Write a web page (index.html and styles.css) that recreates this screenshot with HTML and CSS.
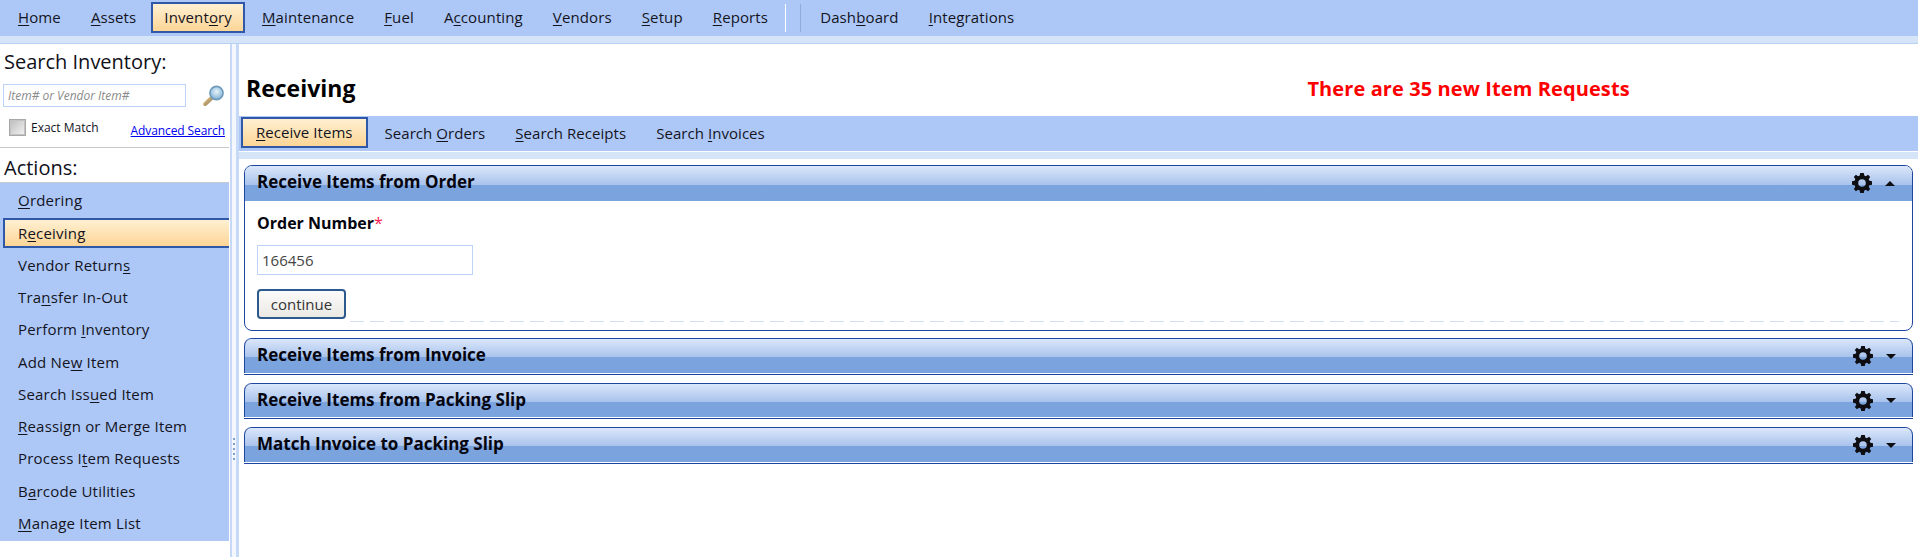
FILE: index.html
```html
<!DOCTYPE html>
<html lang="en">
<head>
<meta charset="utf-8">
<title>Receiving</title>
<link rel="stylesheet" href="styles.css">
</head>
<body>
<svg class="defs" width="0" height="0" aria-hidden="true">
  <symbol id="gear" viewBox="0 0 20 20">
    <path d="M8.2 0h3.6l.5 2.6 1.6.7 2.2-1.5 2.1 2.1-1.5 2.2.7 1.6 2.6.5v3.6l-2.6.5-.7 1.6 1.5 2.2-2.1 2.1-2.2-1.5-1.6.7-.5 2.6H8.2l-.5-2.6-1.6-.7-2.2 1.5-2.1-2.1 1.5-2.2-.7-1.6L0 11.8V8.2l2.6-.5.7-1.6-1.5-2.2 2.1-2.1 2.2 1.5 1.6-.7zM10 6.2a3.8 3.8 0 1 0 0 7.6 3.8 3.8 0 0 0 0-7.6z" fill="#0d0d12" fill-rule="evenodd"/>
  </symbol>
</svg>
<header class="topbar">
  <nav class="mainnav">
    <a class="nav-item"><u>H</u>ome</a>
    <a class="nav-item"><u>A</u>ssets</a>
    <a class="nav-item active">Invent<u>o</u>ry</a>
    <a class="nav-item"><u>M</u>aintenance</a>
    <a class="nav-item"><u>F</u>uel</a>
    <a class="nav-item">A<u>c</u>counting</a>
    <a class="nav-item"><u>V</u>endors</a>
    <a class="nav-item"><u>S</u>etup</a>
    <a class="nav-item"><u>R</u>eports</a>
    <span class="nav-sep"></span>
    <a class="nav-item">Dash<u>b</u>oard</a>
    <a class="nav-item"><u>I</u>ntegrations</a>
  </nav>
</header>
<div class="band"></div>
<div class="layout">
  <aside class="sidebar">
    <h2 class="side-title">Search Inventory:</h2>
    <div class="search-row">
      <input class="search-input" type="text" placeholder="Item# or Vendor Item#">
      <svg class="magnifier" viewBox="0 0 22 22" aria-hidden="true">
        <defs>
          <radialGradient id="lens" cx="50%" cy="40%" r="60%">
            <stop offset="0" stop-color="#e6f4fb"/>
            <stop offset="1" stop-color="#7fb0d2"/>
          </radialGradient>
          <linearGradient id="handle" x1="0" y1="0" x2="1" y2="1">
            <stop offset="0" stop-color="#e8c98a"/>
            <stop offset="1" stop-color="#8f7a55"/>
          </linearGradient>
        </defs>
        <path d="M9 12.5 2.2 19" stroke="url(#handle)" stroke-width="4" stroke-linecap="round"/>
        <circle cx="13.5" cy="8" r="6.6" fill="url(#lens)" stroke="#6f9cbd" stroke-width="1.6"/>
      </svg>
    </div>
    <div class="match-row">
      <label class="exact"><span class="checkbox"></span>Exact Match</label>
      <a class="advanced">Advanced Search</a>
    </div>
    <h2 class="side-title actions-title">Actions:</h2>
    <ul class="side-menu">
      <li><u>O</u>rdering</li>
      <li class="active">R<u>e</u>ceiving</li>
      <li>Vendor Return<u>s</u></li>
      <li>Tra<u>n</u>sfer In-Out</li>
      <li>Perform <u>I</u>nventory</li>
      <li>Add Ne<u>w</u> Item</li>
      <li>Search Iss<u>u</u>ed Item</li>
      <li><u>R</u>eassign or Merge Item</li>
      <li>Process I<u>t</u>em Requests</li>
      <li>B<u>a</u>rcode Utilities</li>
      <li><u>M</u>anage Item List</li>
    </ul>
  </aside>
  <div class="splitter"><span class="grip"></span></div>
  <main class="content">
    <div class="page-head">
      <h1 class="page-title">Receiving</h1>
      <p class="notice">There are 35 new Item Requests</p>
    </div>
    <nav class="tabs">
      <a class="tab active"><u>R</u>eceive Items</a>
      <a class="tab">Search <u>O</u>rders</a>
      <a class="tab"><u>S</u>earch Receipts</a>
      <a class="tab">Search <u>I</u>nvoices</a>
    </nav>
    <div class="band band-sub"></div>
    <section class="panel open">
      <div class="panel-head">
        <h3>Receive Items from Order</h3>
        <svg class="gear"><use href="#gear"/></svg>
        <span class="caret up"></span>
      </div>
      <div class="panel-body">
        <label class="field-label">Order Number<span class="req">*</span></label>
        <input class="order-input" type="text" value="166456">
        <button class="btn" type="button">continue</button>
        <div class="dash"></div>
      </div>
    </section>
    <section class="panel">
      <div class="panel-head">
        <h3>Receive Items from Invoice</h3>
        <svg class="gear"><use href="#gear"/></svg>
        <span class="caret"></span>
      </div>
    </section>
    <section class="panel short">
      <div class="panel-head">
        <h3>Receive Items from Packing Slip</h3>
        <svg class="gear"><use href="#gear"/></svg>
        <span class="caret"></span>
      </div>
    </section>
    <section class="panel">
      <div class="panel-head">
        <h3>Match Invoice to Packing Slip</h3>
        <svg class="gear"><use href="#gear"/></svg>
        <span class="caret"></span>
      </div>
    </section>
  </main>
</div>
</body>
</html>
```

FILE: styles.css
```css
* { box-sizing: border-box; }
html, body { margin: 0; padding: 0; height: 557px; overflow: hidden; background: #fff; }
body { font-family: "Open Sans", "Noto Sans", "Liberation Sans", sans-serif; font-size: 15px; color: #14141e; }
.defs { position: absolute; }
u { text-underline-offset: 2px; }

.topbar { height: 36px; background: #adc8f7; padding: 1px 0 0 3px; }
.mainnav { display: flex; align-items: flex-start; height: 32px; }
.nav-item { display: block; height: 31px; line-height: 30px; padding: 0 15px; margin-top: 1px; white-space: nowrap; letter-spacing: .12px; }
.nav-item.active { padding: 0 11px; line-height: 27px; border: 2px solid #2f58a8; background: linear-gradient(#fff0d2, #fdd596); margin: 1px 2px 0 0; }
.nav-sep { width: 16px; height: 28px; margin: 3px 4px 0 2px; border-left: 1px solid #fff; border-right: 1px solid #8fadd9; }

.band { height: 8px; background: #d5e4f6; border-bottom: 1px solid #b9d0f5; }
.layout { display: flex; height: 513px; }

.sidebar { width: 230px; flex: none; }
.side-title { margin: 0; font-weight: 400; font-size: 20px; line-height: 28px; padding: 4px 0 0 4px; color: #10101a; }
.search-row { display: flex; align-items: center; padding: 8px 0 0 3px; }
.search-input { width: 183px; height: 23px; border: 1px solid #bcd3f7; padding: 0 4px; font: italic 12px "Open Sans", sans-serif; outline: none; }
.search-input::placeholder { color: #8a8a8a; opacity: 1; }
.magnifier { width: 22px; height: 22px; margin-left: 17px; }
.match-row { display: flex; justify-content: space-between; align-items: flex-end; height: 41px; padding: 0 4px 7px 9px; border-bottom: 1px solid #c8c8c8; width: 229px; }
.exact { display: flex; align-items: center; font-size: 12px; gap: 5px; margin-bottom: 4px; }
.checkbox { width: 17px; height: 17px; border: 2px solid #c4c4c4; background: linear-gradient(135deg, #c0c0c0, #f0f0f0); outline: 1px solid #a8a8a8; outline-offset: -1px; }
.advanced { font-size: 12px; letter-spacing: -.1px; color: #0000ee; text-decoration: underline; margin-bottom: 1px; }
.actions-title { line-height: 30px; padding-top: 5px; height: 34px; }
.side-menu { list-style: none; margin: 0; padding: 1px 0 0; width: 229px; height: 359px; background: #adc8f7; border-top: 1px solid #c8c8d0; }
.side-menu li { height: 32.3px; line-height: 32px; padding-left: 18px; white-space: nowrap; letter-spacing: .2px; }
.side-menu li.active { margin-left: 3px; padding-left: 13px; line-height: 26px; border: 2px solid #2f58a8; border-right: 0; background: linear-gradient(#fff0d2, #fdd596); height: 30px; margin-top: 2px; margin-bottom: .4px; }

.splitter { width: 9px; flex: none; position: relative; border-left: 2px solid #c6daf8; border-right: 3px solid #c6daf8; background: #f4f8fe; }
.grip { position: absolute; left: 1px; top: 394px; width: 2px; height: 24px; background: repeating-linear-gradient(#7fa0d0 0 2px, transparent 2px 5px); }

.content { flex: 1; min-width: 0; }
.page-head { display: flex; align-items: center; height: 72px; padding: 16px 0 0 7px; }
.page-title { margin: 0; font-size: 23px; font-weight: 700; color: #000; }
.notice { margin: 0 0 0 952px; font-size: 20px; letter-spacing: .1px; font-weight: 700; color: #ff0000; white-space: nowrap; }

.tabs { display: flex; height: 35px; background: #adc8f7; padding: 1px 0 0 2px; align-items: flex-start; }
.tab { display: block; height: 33px; line-height: 33px; padding: 0 15px; white-space: nowrap; letter-spacing: .05px; }
.tab.active { height: 31px; line-height: 27px; border: 2px solid #2f58a8; background: linear-gradient(#fff0d2, #fdd596); padding: 0 13px; margin-right: 2px; }
.band-sub { border-top: 1px solid #fff; border-bottom: 0; height: 8px; margin-bottom: 6px; }

.panel { margin: 0 5px 8px 5px; border-top: 1px solid #1f469e; border-radius: 8px 8px 0 0; border-bottom: 1px solid #1f469e; padding-bottom: 1px; }
.panel.open { border: 1px solid #1f469e; border-radius: 8px; padding-bottom: 0; margin-bottom: 7px; }
.panel-head { display: flex; align-items: center; height: 34px; padding: 0 16px 3px 12px; border: solid #1f469e; border-width: 0 1px; border-radius: 7px 7px 0 0; background: linear-gradient(#dbe7fb, #a9c3ec 53%, #7ba3dd 54%, #7ba3dd); }
.panel.short .panel-head { height: 33px; }
.panel.open .panel-head { border: 0; padding: 0 17px 4px 12px; height: 35px; }
.panel-head h3 { flex: 1; margin: 0; font-size: 17px; font-weight: 700; color: #050510; }
.gear { width: 20px; height: 20px; margin: 3px 13px 0 0; flex: none; }
.caret { width: 0; height: 0; border: 5px solid transparent; border-top: 5px solid #0d0d12; border-bottom: 0; margin-top: 3px; }
.caret.up { border-top: 0; border-bottom: 5px solid #0d0d12; }

.panel-body { position: relative; height: 129px; padding: 10px 12px 0; }
.field-label { display: block; font-size: 16px; font-weight: 700; line-height: 24px; color: #050510; }
.req { color: #ff2050; font-weight: 400; }
.order-input { display: block; width: 216px; height: 30px; margin-top: 10px; padding: 0 4px; border: 1px solid #bcd3f7; font: 15px "Open Sans", sans-serif; color: #444; outline: none; }
.btn { display: block; width: 89px; height: 30px; margin-top: 14px; padding: 0; border: 2px solid #2d5a8e; border-radius: 4px; background: linear-gradient(#fbfbfb, #ece9e4); font: 15px "Open Sans", sans-serif; color: #333; }
.dash { position: absolute; left: 105px; right: 13px; top: 120px; height: 1px; background: repeating-linear-gradient(90deg, #d3dff2 0 14px, transparent 14px 20px); }
```
